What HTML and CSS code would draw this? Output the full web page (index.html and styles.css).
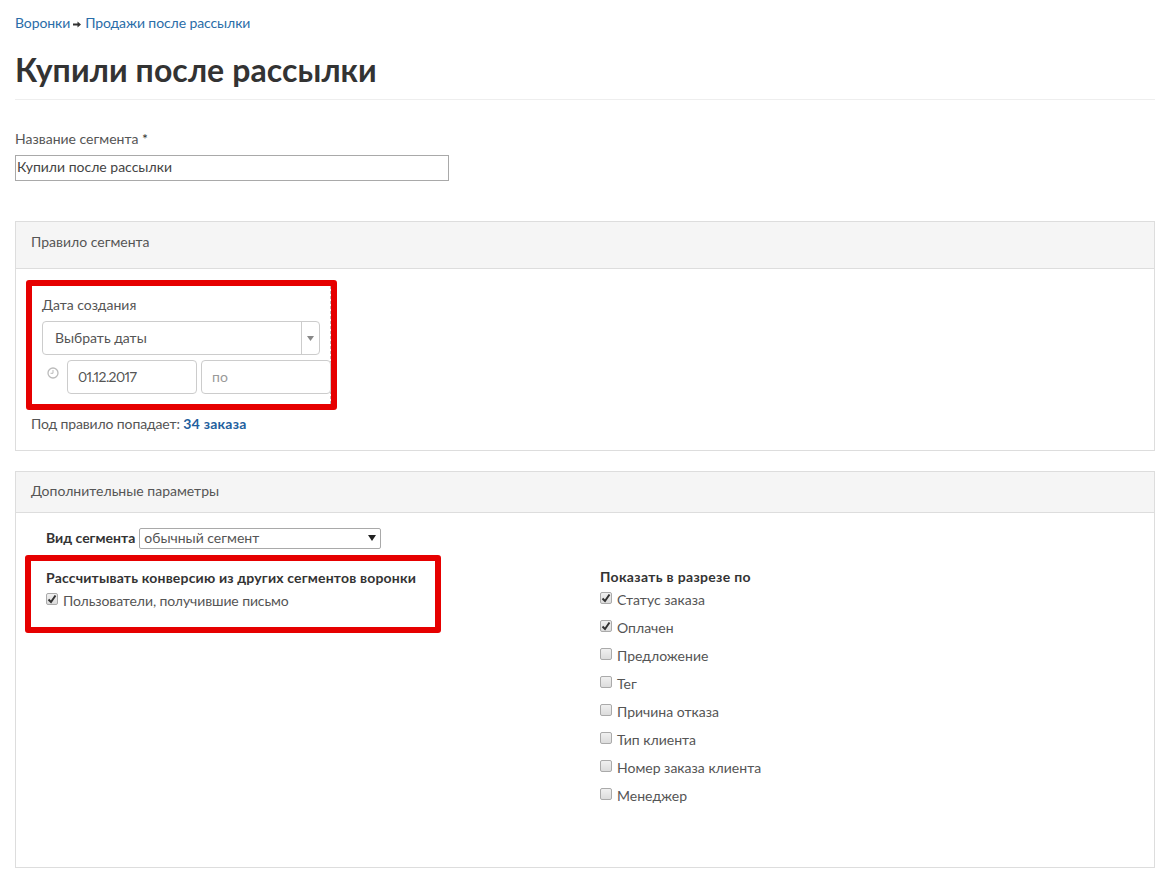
FILE: index.html
```html
<!DOCTYPE html>
<html lang="ru">
<head>
<meta charset="utf-8">
<title>Купили после рассылки</title>
<link rel="stylesheet" href="styles.css">
</head>
<body>
<nav class="crumbs"><a href="#">Воронки</a><svg class="arrow" width="8" height="7" viewBox="0 0 8 7"><path d="M0 2.5h4.5V.5L8 3.5l-3.5 3v-2H0z" fill="#333"/></svg><a href="#">Продажи после рассылки</a></nav>
<h1 class="title">Купили после рассылки</h1>
<div class="name-field">
  <label class="label">Название сегмента <span class="req">*</span></label>
  <div class="name-input">Купили после рассылки</div>
</div>

<section class="panel rule">
  <header class="panel-head">Правило сегмента</header>
  <div class="rule-body">
    <div class="red-box rb1"></div>
    <div class="rule-field">
      <div class="label">Дата создания</div>
      <div class="combo"><span class="combo-text">Выбрать даты</span><span class="combo-btn"><svg width="7" height="5" viewBox="0 0 7 5"><path d="M0 0h7L3.5 5z" fill="#888"/></svg></span></div>
      <div class="dates">
        <svg class="clock" width="12" height="12" viewBox="0 0 12 12"><circle cx="6" cy="6" r="5" fill="none" stroke="#bbb" stroke-width="1.3"/><path d="M6 3v3.3H3.5" fill="none" stroke="#bbb"/></svg>
        <div class="date-input nums">01.12.2017</div>
        <div class="date-input placeholder">по</div>
      </div>
    </div>
    <p class="hit">Под правило попадает: <a href="#">34 заказа</a></p>
  </div>
</section>

<section class="panel extra">
  <header class="panel-head short">Дополнительные параметры</header>
  <div class="extra-body">
    <div class="red-box rb2"></div>
    <div class="kind"><b>Вид сегмента</b><div class="select"><span>обычный сегмент</span><svg width="8" height="6" viewBox="0 0 8 6"><path d="M0 0h8L4 6z" fill="#222"/></svg></div></div>
    <div class="cols">
      <div class="col-left">
        <div class="col-title">Рассчитывать конверсию из других сегментов воронки</div>
        <div class="check on"><i class="box"><svg width="10" height="10" viewBox="0 0 10 10"><path d="M1.5 5.5 4 8l4.5-6.5" fill="none" stroke="#333" stroke-width="2"/></svg></i>Пользователи, получившие письмо</div>
      </div>
      <div class="col-right">
        <div class="col-title wide">Показать в разрезе по</div>
        <div class="check row"><i class="box"><svg width="10" height="10" viewBox="0 0 10 10"><path d="M1.5 5.5 4 8l4.5-6.5" fill="none" stroke="#333" stroke-width="2"/></svg></i>Статус заказа</div>
        <div class="check row"><i class="box"><svg width="10" height="10" viewBox="0 0 10 10"><path d="M1.5 5.5 4 8l4.5-6.5" fill="none" stroke="#333" stroke-width="2"/></svg></i>Оплачен</div>
        <div class="check row"><i class="box"></i>Предложение</div>
        <div class="check row"><i class="box"></i>Тег</div>
        <div class="check row"><i class="box"></i>Причина отказа</div>
        <div class="check row"><i class="box"></i>Тип клиента</div>
        <div class="check row"><i class="box"></i>Номер заказа клиента</div>
        <div class="check row"><i class="box"></i>Менеджер</div>
      </div>
    </div>
  </div>
</section>
</body>
</html>
```

FILE: styles.css
```css
* { box-sizing: border-box; }
html, body { height: 100%; }
body {
  margin: 0;
  padding: 14px 17px 0 15px;
  background: #fff;
  color: #555;
  font: 14px/20px Lato, "Noto Sans", sans-serif;
  overflow: hidden;
}
a { color: #2a6da8; text-decoration: none; }
.crumbs { height: 18px; line-height: 18px; color: #333; letter-spacing: -0.1px; }
.arrow { margin: 0 4px 0 3px; }
.title {
  margin: 18px 0 0;
  padding-bottom: 10px;
  height: 50px;
  line-height: 40px;
  font-size: 32px;
  font-weight: 700;
  color: #333;
  letter-spacing: 0.1px;
  border-bottom: 1px solid #eee;
}
.name-field { margin-top: 29px; }
.label { display: block; line-height: 20px; color: #555; }
.req { color: #333; }
.name-input {
  width: 434px;
  height: 26px;
  margin-top: 6px;
  padding-left: 1px;
  border: 1px solid #a9a9a9;
  line-height: 22px;
  color: #444;
}
.panel { border: 1px solid #ddd; }
.rule { margin-top: 40px; height: 230px; }
.extra { margin-top: 20px; height: 397px; }
.panel-head {
  height: 47px;
  line-height: 39px;
  padding-left: 15px;
  background: #f5f5f5;
  border-bottom: 1px solid #ddd;
  color: #555;
}
.panel-head.short { height: 41px; line-height: 37px; }
.rule-body { position: relative; padding: 17px 0 0 15px; }
.red-box {
  position: absolute;
  border: 6px solid #e60000;
  border-radius: 3px;
  pointer-events: none;
}
.rb1 { left: 10px; top: 11px; width: 311px; height: 130px; z-index: 1; }
.rb2 { left: 9px; top: 42px; width: 416px; height: 78px; }
.rule-field {
  margin-left: 11px;
  width: 289px;
  padding: 9px 0 10px;
  border-right: 1px dashed #bbb;
}
.combo {
  display: flex;
  width: 278px;
  height: 34px;
  margin-top: 6px;
  border: 1px solid #ccc;
  border-radius: 4px;
}
.combo-text { flex: 1; padding-left: 12px; line-height: 32px; color: #555; }
.combo-btn {
  width: 18px;
  display: flex;
  align-items: center;
  justify-content: center;
  border-left: 1px solid #ccc;
}
.dates { display: flex; margin-top: 5px; }
.clock { margin: 7px 8px 0 5px; flex: none; }
.date-input {
  flex: none;
  width: 130px;
  height: 34px;
  margin-right: 4px;
  padding-left: 10px;
  border: 1px solid #ccc;
  border-radius: 4px;
  line-height: 32px;
  color: #555;
  background: #fff;
}
.nums { font-variant-numeric: proportional-nums; letter-spacing: -0.6px; }
.placeholder { color: #999; margin-right: 0; }
.hit { margin: 10px 0 0; line-height: 20px; letter-spacing: -0.13px; }
.hit a { font-weight: 700; color: #1f5f9e; font-variant-numeric: proportional-nums; letter-spacing: 0.2px; }
.extra-body { position: relative; padding: 15px 0 0 30px; }
.kind { display: flex; align-items: center; height: 20px; color: #333; }
.kind b { margin-right: 4px; }
.select {
  display: flex;
  align-items: center;
  justify-content: space-between;
  width: 242px;
  height: 21px;
  padding: 0 4px;
  border: 1px solid #a9a9a9;
  border-radius: 2px;
  color: #555;
}
.cols { display: flex; margin-top: 20px; }
.col-left { width: 554px; }
.col-title { font-weight: 700; color: #333; line-height: 20px; letter-spacing: 0.18px; }
.col-title.wide { letter-spacing: 0.33px; margin: -1px 0 -1px; }
.check { display: flex; align-items: center; height: 24px; color: #555; }
.on { letter-spacing: -0.1px; margin-top: 1px; }
.box {
  display: flex;
  align-items: center;
  justify-content: center;
  width: 12px;
  height: 12px;
  margin: -4px 5px 0 0;
  border: 1px solid #aaa;
  border-radius: 2px;
  background: linear-gradient(#f0f0f0, #dcdcdc);
}
.row { height: 28px; }
.row:first-of-type { height: 24px; }
```
